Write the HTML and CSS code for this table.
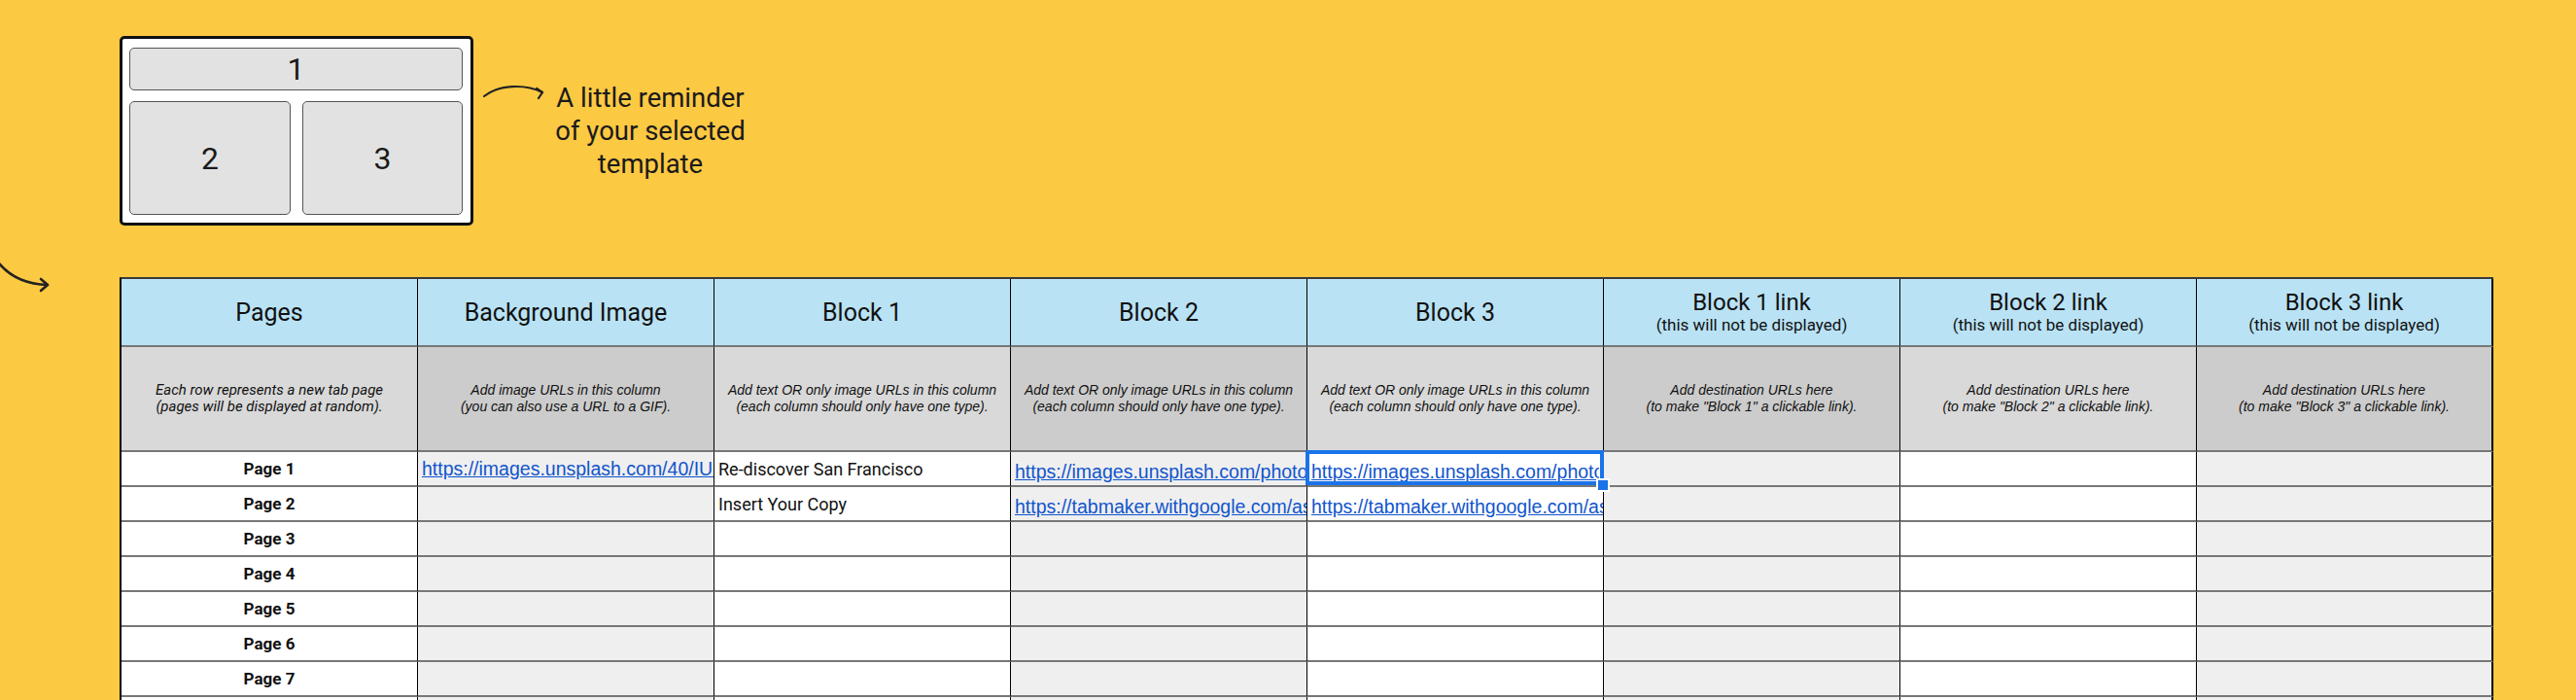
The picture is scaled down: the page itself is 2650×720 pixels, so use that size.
FILE: index.html
```html
<!DOCTYPE html>
<html lang="en">
<head>
<meta charset="utf-8">
<title>Tab maker sheet</title>
<link rel="stylesheet" href="styles.css">
</head>
<body>
<div class="page">
  <div class="top">
    <div class="template">
      <div class="slot slot-wide">1</div>
      <div class="slot">2</div>
      <div class="slot">3</div>
    </div>
    <div class="note">
      <svg class="note-arrow" width="68" height="24" viewBox="0 0 68 24">
        <path d="M3 15 C 18 3, 45 2, 63 11" fill="none" stroke="#222" stroke-width="2.2" stroke-linecap="round"/>
        <path d="M57 7 L63 11 L59 17" fill="none" stroke="#222" stroke-width="2.2" stroke-linecap="round" stroke-linejoin="round"/>
      </svg>
      <p class="note-text">A little reminder<br>of your selected<br>template</p>
    </div>
  </div>

  <div class="sheet-row">
    <svg class="side-arrow" width="123" height="60" viewBox="0 0 123 60">
      <path d="M-4 2 Q 14 27 49 28" fill="none" stroke="#222" stroke-width="2.6" stroke-linecap="round"/>
      <path d="M42 22 L49 28 L42 34" fill="none" stroke="#222" stroke-width="2.6" stroke-linecap="round" stroke-linejoin="round"/>
    </svg>

    <div class="sheet">
      <div class="cell head">Pages</div>
      <div class="cell head">Background Image</div>
      <div class="cell head">Block 1</div>
      <div class="cell head">Block 2</div>
      <div class="cell head">Block 3</div>
      <div class="cell head"><span class="head-main">Block 1 link</span><span class="head-sub">(this will not be displayed)</span></div>
      <div class="cell head"><span class="head-main">Block 2 link</span><span class="head-sub">(this will not be displayed)</span></div>
      <div class="cell head"><span class="head-main">Block 3 link</span><span class="head-sub">(this will not be displayed)</span></div>

      <div class="cell desc light desc-first">Each row represents a new tab page<br>(pages will be displayed at random).</div>
      <div class="cell desc dark">Add image URLs in this column<br>(you can also use a URL to a GIF).</div>
      <div class="cell desc light">Add text OR only image URLs in this column<br>(each column should only have one type).</div>
      <div class="cell desc dark">Add text OR only image URLs in this column<br>(each column should only have one type).</div>
      <div class="cell desc light">Add text OR only image URLs in this column<br>(each column should only have one type).</div>
      <div class="cell desc dark">Add destination URLs here<br>(to make "Block 1" a clickable link).</div>
      <div class="cell desc light">Add destination URLs here<br>(to make "Block 2" a clickable link).</div>
      <div class="cell desc dark">Add destination URLs here<br>(to make "Block 3" a clickable link).</div>

      <div class="cell data w page-name">Page 1</div>
      <div class="cell data g"><a class="link link-mid" href="#">https://images.unsplash.com/40/IUUO7GaFsTUFy1fyrJPo_photo-1501594907352.jpg</a></div>
      <div class="cell data w text">Re-discover San Francisco</div>
      <div class="cell data g"><a class="link" href="#">https://images.unsplash.com/photo-1449034446853-66c86144b0ad</a></div>
      <div class="cell data w selected"><a class="link" href="#">https://images.unsplash.com/photo-1501594907352-04cda38ebc29</a></div>
      <div class="cell data g"></div>
      <div class="cell data w"></div>
      <div class="cell data g"></div>

      <div class="cell data w page-name">Page 2</div>
      <div class="cell data g"></div>
      <div class="cell data w text">Insert Your Copy</div>
      <div class="cell data g"><a class="link" href="#">https://tabmaker.withgoogle.com/assets/images/placeholder.png</a></div>
      <div class="cell data w"><a class="link" href="#">https://tabmaker.withgoogle.com/assets/images/placeholder.png</a></div>
      <div class="cell data g"></div>
      <div class="cell data w"></div>
      <div class="cell data g"></div>

      <div class="cell data w page-name">Page 3</div>
      <div class="cell data g"></div><div class="cell data w"></div><div class="cell data g"></div>
      <div class="cell data w"></div><div class="cell data g"></div><div class="cell data w"></div><div class="cell data g"></div>

      <div class="cell data w page-name">Page 4</div>
      <div class="cell data g"></div><div class="cell data w"></div><div class="cell data g"></div>
      <div class="cell data w"></div><div class="cell data g"></div><div class="cell data w"></div><div class="cell data g"></div>

      <div class="cell data w page-name">Page 5</div>
      <div class="cell data g"></div><div class="cell data w"></div><div class="cell data g"></div>
      <div class="cell data w"></div><div class="cell data g"></div><div class="cell data w"></div><div class="cell data g"></div>

      <div class="cell data w page-name">Page 6</div>
      <div class="cell data g"></div><div class="cell data w"></div><div class="cell data g"></div>
      <div class="cell data w"></div><div class="cell data g"></div><div class="cell data w"></div><div class="cell data g"></div>

      <div class="cell data w page-name">Page 7</div>
      <div class="cell data g"></div><div class="cell data w"></div><div class="cell data g"></div>
      <div class="cell data w"></div><div class="cell data g"></div><div class="cell data w"></div><div class="cell data g"></div>

      <div class="cell data w page-name">Page 8</div>
      <div class="cell data g"></div><div class="cell data w"></div><div class="cell data g"></div>
      <div class="cell data w"></div><div class="cell data g"></div><div class="cell data w"></div><div class="cell data g"></div>
    </div>
  </div>
</div>
</body>
</html>
```

FILE: styles.css
```css
html, body {
  margin: 0;
  padding: 0;
  background: #fcc943;
  overflow: hidden;
}

.page {
  width: 2650px;
  height: 720px;
  font-family: Roboto, "Liberation Sans", sans-serif;
  color: #111;
}

.top {
  display: flex;
  align-items: flex-start;
  padding: 37px 0 0 123px;
}

.template {
  width: 364px;
  height: 195px;
  box-sizing: border-box;
  border: 3px solid #111;
  border-radius: 5px;
  background: #fff;
  padding: 9px 8px 8px 7px;
  display: grid;
  grid-template-columns: 166px 165px;
  grid-template-rows: 44px 117px;
  gap: 11px 12px;
}

.slot {
  box-sizing: border-box;
  background: #e2e2e2;
  border: 1.5px solid #555;
  border-radius: 5px;
  display: flex;
  align-items: center;
  justify-content: center;
  font-size: 32px;
  color: #1a1a1a;
}

.slot-wide {
  grid-column: 1 / 3;
}

.note {
  display: flex;
  align-items: flex-start;
  margin: 47px 0 0 8px;
}

.note-arrow {
  display: block;
  flex: none;
}

.note-text {
  margin: 0;
  width: 212px;
  text-align: center;
  font-size: 27.5px;
  line-height: 34px;
  color: #1a1a1a;
}

.sheet-row {
  display: flex;
  align-items: flex-start;
  margin-top: 33px;
}

.side-arrow {
  display: block;
  flex: none;
  overflow: visible;
}

.sheet {
  margin-top: 20px;
  display: grid;
  grid-template-columns: repeat(8, 305px);
  grid-template-rows: 70px 108px repeat(8, 36px);
  border-top: 2px solid #3a3a3a;
  border-left: 2px solid #000;
}

.cell {
  box-sizing: border-box;
  border-right: 1px solid #000;
  border-bottom: 2px solid #777;
  overflow: hidden;
  white-space: nowrap;
  display: flex;
  align-items: center;
  justify-content: center;
  position: relative;
  min-width: 0;
}

.cell:nth-child(8n) {
  border-right: 2px solid #000;
}

.head {
  background: #b9e2f4;
  flex-direction: column;
  font-size: 25px;
  color: #111;
}

.head-main {
  font-size: 24px;
  line-height: 26px;
}

.head-sub {
  font-size: 17px;
  line-height: 20px;
}

.desc {
  font-family: "Liberation Sans", Arial, sans-serif;
  font-style: italic;
  font-size: 14px;
  line-height: 17px;
  text-align: center;
  color: #111;
  white-space: normal;
}

.desc-first {
  font-family: Roboto, sans-serif;
  font-size: 15px;
}

.light { background: #d9d9d9; }
.dark { background: #cccccc; }

.data.w { background: #ffffff; }
.data.g { background: #efefef; }

.data {
  justify-content: flex-start;
  padding: 0 4px;
}

.page-name {
  justify-content: center;
  font-weight: 700;
  font-size: 17px;
  color: #111;
}

.text {
  font-size: 18px;
  color: #111;
}

.link {
  font-family: "Liberation Sans", Arial, sans-serif;
  font-size: 19.5px;
  color: #1155cc;
  text-decoration: underline;
  padding-top: 6px;
}

.link-mid {
  padding-top: 0;
}

.selected {
  overflow: visible;
  z-index: 3;
}

.selected .link {
  display: block;
  overflow: hidden;
  white-space: nowrap;
  max-width: 100%;
}

.selected::after {
  content: "";
  position: absolute;
  top: -2px;
  left: -2px;
  right: -1px;
  bottom: 0;
  border: 4px solid #1a73e8;
  pointer-events: none;
}

.selected::before {
  content: "";
  position: absolute;
  right: -7px;
  bottom: -7px;
  width: 10px;
  height: 10px;
  background: #1a73e8;
  border: 2px solid #fff;
  z-index: 2;
}
```
